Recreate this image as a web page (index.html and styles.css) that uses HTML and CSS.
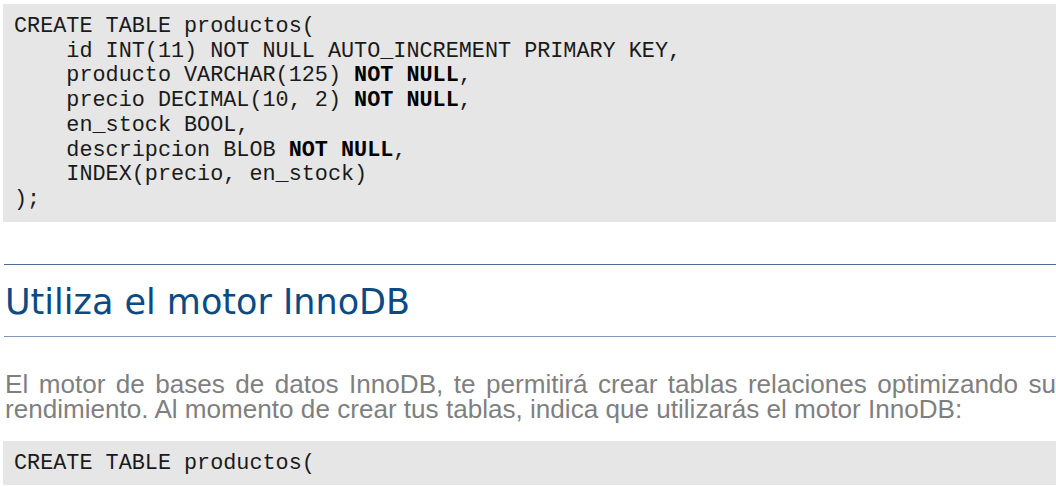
FILE: index.html
```html
<!DOCTYPE html>
<html>
<head>
<meta charset="utf-8">
<link rel="stylesheet" href="styles.css">
</head>
<body>
<pre class="code">CREATE TABLE productos(
    id INT(11) NOT NULL AUTO_INCREMENT PRIMARY KEY,
    producto VARCHAR(125) <b>NOT NULL</b>,
    precio DECIMAL(10, 2) <b>NOT NULL</b>,
    en_stock BOOL,
    descripcion BLOB <b>NOT NULL</b>,
    INDEX(precio, en_stock)
);</pre>
<h2 class="title">Utiliza el motor InnoDB</h2>
<p class="text">El motor de bases de datos InnoDB, te permitirá crear tablas relaciones optimizando su rendimiento. Al momento de crear tus tablas, indica que utilizarás el motor InnoDB:</p>
<pre class="code code-2">CREATE TABLE productos(</pre>
</body>
</html>
```
FILE: styles.css
```css
html, body {
  margin: 0;
  padding: 0;
  background: #ffffff;
}
body {
  padding: 4px 0 0 3px;
}
.code {
  margin: 0;
  background: #e6e6e6;
  font-family: "Liberation Mono", monospace;
  font-size: 21.8px;
  line-height: 24.7px;
  color: #1a1a1a;
  padding: 11px 11px 9px 11px;
}
.code b {
  font-weight: bold;
  color: #000;
}
.title {
  margin: 42px 0 0 1px;
  border-top: 1px solid #4d6c93;
  border-bottom: 1px solid #7f98b5;
  font-family: "DejaVu Sans", sans-serif;
  font-weight: normal;
  font-size: 35px;
  line-height: 40px;
  color: #0b4a82;
  padding: 17px 0 14px 1px;
}
.text {
  margin: 35px 0 0 2px;
  font-family: "Liberation Sans", sans-serif;
  font-size: 26.1px;
  line-height: 25px;
  color: #7f7f7f;
  text-align: justify;
}
.code-2 {
  margin-top: 19px;
}
```
